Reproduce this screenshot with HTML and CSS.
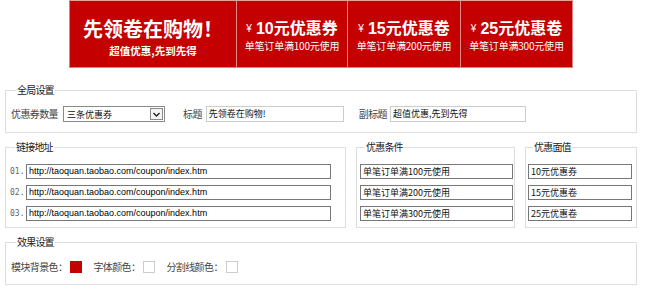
FILE: index.html
```html
<!DOCTYPE html>
<html>
<head>
<meta charset="utf-8">
<link rel="stylesheet" href="styles.css">
</head>
<body>
<div class="banner">
  <div class="b-main">
    <div class="b-title">先领卷在购物！</div>
    <div class="b-sub">超值优惠,先到先得</div>
  </div>
  <div class="b-cp w1">
    <div class="cp-val"><span class="yen">¥</span>10元优惠券</div>
    <div class="cp-cond">单笔订单满100元使用</div>
  </div>
  <div class="b-cp w2">
    <div class="cp-val"><span class="yen">¥</span>15元优惠卷</div>
    <div class="cp-cond">单笔订单满200元使用</div>
  </div>
  <div class="b-cp w3">
    <div class="cp-val"><span class="yen">¥</span>25元优惠卷</div>
    <div class="cp-cond">单笔订单满300元使用</div>
  </div>
</div>

<div class="wrap">
  <fieldset class="fs fs-global">
    <legend>全局设置</legend>
    <div class="row">
      <span class="lbl">优惠券数量</span>
      <div class="select"><span>三条优惠券</span><span class="arrow"><svg width="9" height="9" viewBox="0 0 9 9"><path d="M1.5 3 L4.5 6 L7.5 3" fill="none" stroke="#222" stroke-width="1.4"/></svg></span></div>
      <span class="lbl l-title">标题</span>
      <div class="inp w-title">先领卷在购物!</div>
      <span class="lbl l-sub">副标题</span>
      <div class="inp w-sub">超值优惠,先到先得</div>
    </div>
  </fieldset>

  <div class="cols">
    <fieldset class="fs fs-link">
      <legend>链接地址</legend>
      <div class="rows">
        <div class="lrow"><span class="num">01.</span><div class="inp url">http://taoquan.taobao.com/coupon/index.htm</div></div>
        <div class="lrow"><span class="num">02.</span><div class="inp url">http://taoquan.taobao.com/coupon/index.htm</div></div>
        <div class="lrow"><span class="num">03.</span><div class="inp url">http://taoquan.taobao.com/coupon/index.htm</div></div>
      </div>
    </fieldset>
    <fieldset class="fs fs-cond">
      <legend>优惠条件</legend>
      <div class="rows">
        <div class="inp cond">单笔订单满100元使用</div>
        <div class="inp cond">单笔订单满200元使用</div>
        <div class="inp cond">单笔订单满300元使用</div>
      </div>
    </fieldset>
    <fieldset class="fs fs-val">
      <legend>优惠面值</legend>
      <div class="rows">
        <div class="inp val">10元优惠券</div>
        <div class="inp val">15元优惠卷</div>
        <div class="inp val">25元优惠卷</div>
      </div>
    </fieldset>
  </div>

  <fieldset class="fs fs-effect">
    <legend>效果设置</legend>
    <div class="row erow">
      <span class="lbl">模块背景色：</span><span class="sw sw-red"></span>
      <span class="lbl e2">字体颜色：</span><span class="sw"></span>
      <span class="lbl e2">分割线颜色：</span><span class="sw"></span>
    </div>
  </fieldset>
</div>
</body>
</html>
```

FILE: styles.css
```css
* { box-sizing: border-box; }
body {
  margin: 0;
  background: #fff;
  font-family: "Noto Sans CJK SC", "Liberation Sans", sans-serif;
  font-size: 10px;
  color: #444;
}
.banner {
  margin-left: 69px;
  width: 504px;
  height: 68px;
  background: #c40000;
  border: 1px solid #d98080;
  border-top-color: #e6a0a0;
  display: flex;
  color: #fff;
}
.b-main {
  width: 167px;
  border-right: 1px solid #e48a8a;
  display: flex;
  flex-direction: column;
  align-items: center;
  padding-top: 16px;
}
.b-title {
  font-size: 20px;
  font-weight: 700;
  line-height: 24px;
}
.b-sub {
  font-size: 10.5px;
  font-weight: 700;
  line-height: 14px;
  margin-top: 3px;
}
.b-cp {
  border-right: 1px solid #e48a8a;
  display: flex;
  flex-direction: column;
  align-items: center;
  padding-top: 18px;
}
.b-cp.w1 { width: 111px; }
.b-cp.w2 { width: 113px; }
.b-cp.w3 { width: 111px; border-right: none; }
.cp-val {
  font-size: 16px;
  font-weight: 700;
  line-height: 20px;
  font-family: "Liberation Sans", "Noto Sans CJK SC", sans-serif;
}
.cp-val .yen {
  font-size: 10px;
  font-weight: 400;
  margin-right: 4px;
  vertical-align: 2px;
}
.cp-cond {
  font-size: 10px;
  line-height: 13px;
  letter-spacing: -0.2px;
}
.wrap {
  padding: 0 13px 0 5px;
}
.fs {
  margin: 0;
  border: 1px solid #dedede;
  padding: 0;
  min-width: 0;
}
.fs legend {
  font-size: 10px;
  letter-spacing: -0.8px;
  line-height: 14px;
  padding: 0 1px;
  margin-left: 5px;
  color: #222;
}
.fs-global {
  margin-top: 15px;
  padding: 9px 5px 10px 5px;
}
.row {
  display: flex;
  align-items: center;
}
.lbl {
  color: #444;
  line-height: 16px;
  letter-spacing: -0.6px;
  white-space: nowrap;
}
.select {
  margin-left: 5px;
  width: 102px;
  height: 16px;
  border: 1px solid #8a8a8a;
  display: flex;
  align-items: center;
  justify-content: space-between;
  padding-left: 3px;
  font-size: 9px;
  color: #111;
}
.arrow {
  width: 13px;
  height: 12px;
  border: 1px solid #8a8a8a;
  margin-right: 1px;
  display: flex;
  align-items: center;
  justify-content: center;
  background: #f4f4f4;
}
.l-title { margin-left: 18px; }
.l-sub { margin-left: 15px; }
.inp {
  height: 15px;
  border: 1px solid #8c8c8c;
  font-size: 9px;
  line-height: 13px;
  padding-left: 2px;
  color: #111;
  white-space: nowrap;
  overflow: hidden;
}
.w-title { width: 138px; margin-left: 4px; height: 16px; border-color: #ccc; line-height: 14px; }
.w-sub { width: 136px; margin-left: 3px; height: 16px; border-color: #ccc; line-height: 14px; }
.cols {
  display: flex;
  gap: 10px;
  margin-top: 7px;
  align-items: stretch;
}
.fs-link { width: 341px; padding: 10px 0 6px 4px; }
.fs-cond { width: 159px; padding: 10px 0 6px 3px; }
.fs-val { width: 112px; padding: 10px 0 6px 2px; }
.rows {
  display: flex;
  flex-direction: column;
  gap: 6px;
}
.lrow {
  display: flex;
  align-items: center;
}
.num {
  font-family: "DejaVu Sans Mono", monospace;
  font-size: 8px;
  color: #666;
  width: 16px;
}
.url {
  width: 305px;
  font-family: "Liberation Sans", sans-serif;
  color: #000;
  border-color: #777;
}
.cond { width: 153px; border-color: #777; }
.val { width: 104px; border-color: #777; }
.fs-effect {
  margin-top: 7px;
  padding: 11px 5px 10px 5px;
}
.erow { height: 14px; }
.sw {
  width: 12px;
  height: 12px;
  border: 1px solid #ccc;
  margin-left: 3px;
  background: #fff;
}
.sw-red { background: #c40000; border-color: #c40000; }
.e2 { margin-left: 11px; }
```
